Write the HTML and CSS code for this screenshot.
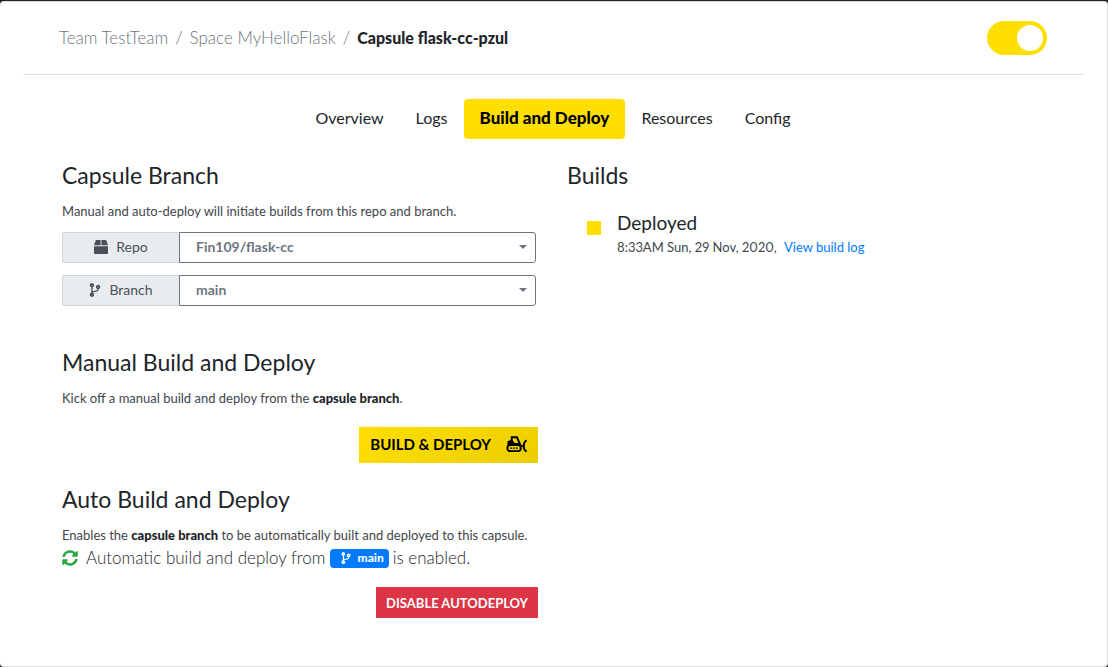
FILE: index.html
```html
<!DOCTYPE html>
<html lang="en">
<head>
<meta charset="utf-8">
<title>Capsule flask-cc-pzul</title>
<link rel="stylesheet" href="styles.css">
</head>
<body>
<svg class="sprite" aria-hidden="true">
  <symbol id="branch" viewBox="0 0 384 512"><path fill="currentColor" d="M384 144c0-44.200-35.800-80-80-80s-80 35.800-80 80c0 36.400 24.300 67.100 57.500 76.800-.6 16.100-4.200 28.500-11 36.900-15.400 19.200-49.300 22.400-85.200 25.700-28.200 2.600-57.400 5.400-81.300 16.900v-144c32.500-10.200 56-40.500 56-76.300 0-44.200-35.800-80-80-80S0 35.800 0 80c0 35.800 23.500 66.100 56 76.300v199.300C23.500 365.900 0 396.200 0 432c0 44.200 35.800 80 80 80s80-35.800 80-80c0-34-21.200-63.100-51.200-74.600 3.100-5.200 7.800-9.800 14.900-13.400 16.200-8.200 40.400-10.400 66.100-12.800 42.200-3.900 90-8.400 118.200-43.400 14-17.400 21.100-39.800 21.600-67.900 31.600-10.800 54.400-40.700 54.400-75.900zM80 64c8.800 0 16 7.200 16 16s-7.200 16-16 16-16-7.200-16-16 7.200-16 16-16zm0 384c-8.800 0-16-7.200-16-16s7.200-16 16-16 16 7.200 16 16-7.200 16-16 16zm224-320c8.800 0 16 7.200 16 16s-7.200 16-16 16-16-7.200-16-16 7.200-16 16-16z"/></symbol>
</svg>
<main class="card">
  <header class="card-header">
    <nav class="breadcrumb" aria-label="Breadcrumb">
      <a href="#">Team TestTeam</a><span>/</span><a href="#">Space MyHelloFlask</a><span>/</span><strong>Capsule flask-cc-pzul</strong>
    </nav>
    <input class="toggle" type="checkbox" role="switch" aria-label="Capsule enabled" checked>
  </header>
  <nav class="tabs" aria-label="Capsule sections">
    <a href="#">Overview</a>
    <a href="#">Logs</a>
    <a href="#" class="active" aria-current="page">Build and Deploy</a>
    <a href="#">Resources</a>
    <a href="#">Config</a>
  </nav>
  <div class="columns">
    <div class="column">
      <section class="section source">
        <h2>Capsule Branch</h2>
        <p class="note">Manual and auto-deploy will initiate builds from this repo and branch.</p>
        <div class="field">
          <label for="repo">
            <svg class="icon-box" viewBox="0 0 512 512" aria-hidden="true"><path fill="currentColor" d="M509.500 184.600 458.900 32.800C452.400 13.200 434.100 0 413.400 0H272v192h238.700c-.4-2.500-.4-5-1.200-7.400zM240 0H98.600c-20.700 0-39 13.200-45.500 32.800L2.500 184.600c-.8 2.400-.8 4.900-1.200 7.400H240V0zM0 224v240c0 26.500 21.500 48 48 48h416c26.500 0 48-21.500 48-48V224H0z"/></svg>
            Repo
          </label>
          <div class="select"><select id="repo"><option>Fin109/flask-cc</option></select></div>
        </div>
        <div class="field">
          <label for="branch-name"><svg class="icon-branch" aria-hidden="true"><use href="#branch"/></svg>Branch</label>
          <div class="select"><select id="branch-name"><option>main</option></select></div>
        </div>
      </section>
      <section class="section manual">
        <h2>Manual Build and Deploy</h2>
        <p class="note">Kick off a manual build and deploy from the <strong>capsule branch</strong>.</p>
        <button class="button build" type="button">BUILD &amp; DEPLOY
          <svg class="icon-dozer" viewBox="0 0 22 18" fill="none" stroke="currentColor" stroke-width="2" aria-hidden="true"><path d="M6 8V2h5.500l3 7"/><path fill="currentColor" stroke="none" d="M1.500 9V6.500L4 5h3l2 3h6.500v3h-14z"/><rect x="1.500" y="10" width="14" height="6.500" rx="3"/><path stroke-width="1.500" stroke-dasharray="2 1" d="M4.500 13.300h8.500"/><path d="M15 11h3.500M21.500 5Q18.500 7 18.500 11t3 6"/></svg>
        </button>
      </section>
      <section class="section auto">
        <h2>Auto Build and Deploy</h2>
        <p class="note">Enables the <strong>capsule branch</strong> to be automatically built and deployed to this capsule.</p>
        <p class="status">
          <svg class="icon-sync" viewBox="0 0 512 512" aria-hidden="true"><path fill="currentColor" d="M370.700 133.300C339.500 104 298.900 88 255.800 88c-77.500.1-144.300 53.200-162.800 126.900-1.300 5.400-6.100 9.100-11.700 9.100H24.100c-7.500 0-13.200-6.800-11.800-14.200C33.900 94.900 134.800 8 256 8c66.400 0 126.800 26.100 171.300 68.700L463 41c15.100-15.100 41-4.400 41 17v134c0 13.300-10.700 24-24 24H346c-21.400 0-32.100-25.900-17-41l41.700-41.700zM32 296h134c21.400 0 32.100 25.900 17 41l-41.800 41.800c31.300 29.300 71.800 45.300 114.900 45.300 77.400-.1 144.300-53.100 162.800-126.800 1.300-5.400 6.100-9.100 11.700-9.100h57.300c7.500 0 13.200 6.800 11.800 14.200C478.100 417.100 377.200 504 256 504c-66.400 0-126.800-26.100-171.300-68.700L49 471c-15.100 15.100-41 4.400-41-17V320c0-13.300 10.700-24 24-24z"/></svg>
          <span>Automatic build and deploy from</span>
          <span class="badge"><svg class="icon-branch" aria-hidden="true"><use href="#branch"/></svg>main</span>
          <span>is enabled.</span>
        </p>
        <button class="button disable" type="button">DISABLE AUTODEPLOY</button>
      </section>
    </div>
    <section class="builds">
      <h2>Builds</h2>
      <article class="build-item">
        <span class="marker"></span>
        <div>
          <h3>Deployed</h3>
          <p class="note">8:33AM Sun, 29 Nov, 2020, <a href="#">View build log</a></p>
        </div>
      </article>
    </section>
  </div>
</main>
</body>
</html>
```
FILE: styles.css
```css
* { box-sizing: border-box; }
body {
  margin: 0;
  padding-top: 1px;
  min-height: 100vh;
  display: flex;
  background: #212025;
  color: #212529;
  font: 400 16px/24px Lato, "Liberation Sans", sans-serif;
}
h2, h3, p { margin: 0; }
h2 { font-size: 23px; line-height: 30px; font-weight: 400; }
h3 { font-size: 19px; line-height: 24px; font-weight: 400; }
a { text-decoration: none; }
strong { color: #212529; font-weight: 900; }
svg { flex: none; }
.sprite { position: absolute; width: 0; height: 0; }
.card {
  flex: 1;
  background: #fff;
  border: solid #dcdcdc;
  border-width: 1px 1px 1px 0;
  border-radius: 4px;
  padding: 0 24px 0 23px;
}
.card-header {
  display: flex;
  align-items: center;
  justify-content: space-between;
  height: 73px;
  padding: 0 36px;
  border-bottom: 1px solid #dedede;
}
.breadcrumb { display: flex; gap: 7px; color: #6c757d; font-size: 17px; font-weight: 300; }
.breadcrumb a { color: #6c757d; }
.breadcrumb strong { font-size: 16px; }
.toggle {
  appearance: none;
  display: flex;
  justify-content: flex-end;
  align-items: center;
  width: 60px;
  height: 34px;
  margin: 0;
  padding: 4px;
  border-radius: 17px;
  background: #ffdf00;
}
.toggle::before { content: ""; width: 26px; height: 26px; border-radius: 50%; background: #fff; }
.toggle:not(:checked) { justify-content: flex-start; background: #ccc; }
.tabs { display: flex; justify-content: center; margin-top: 24px; }
.tabs a { padding: 7px 16px 9px; border-radius: 4px; color: #212529; }
.tabs .active { background: #ffdf00; color: #000; font-size: 17px; font-weight: 900; }
.columns {
  display: grid;
  grid-template-columns: 1fr 1fr;
  gap: 28px;
  padding: 21px 39px 46px;
}
.note { color: #41464b; font-size: 13px; line-height: 20px; margin-top: 11px; font-variant-numeric: proportional-nums; }
.note a { color: #007bff; margin-left: 4px; }
.section { display: flex; flex-direction: column; }
.column { padding-right: 1px; }
.source { padding-right: 2px; }
.manual { margin-top: 41px; }
.auto { margin-top: 21px; }
.field { display: flex; margin-top: 12px; }
.note + .field { margin-top: 11px; }
.field label {
  display: flex;
  align-items: center;
  justify-content: center;
  gap: 8px;
  width: 117px;
  height: 31px;
  padding-bottom: 2px;
  border: 1px solid #ced4da;
  border-right: 0;
  border-radius: 3px 0 0 3px;
  background: #e9ecef;
  color: #495057;
  font-size: 14px;
}
.icon-box { width: 14px; height: 14px; }
.icon-branch { width: 12px; height: 14px; }
.select { position: relative; flex: 1; }
.select select {
  appearance: none;
  width: 100%;
  height: 31px;
  padding: 0 16px 2px;
  border: 1px solid #6c757d;
  border-radius: 0 3px 3px 0;
  background: #fff;
  color: #6c757d;
  font: 700 14px/20px Lato, "Liberation Sans", sans-serif;
}
.select::after {
  content: "";
  position: absolute;
  top: 13px;
  right: 9px;
  border: 4px solid transparent;
  border-top-color: #6c757d;
  border-bottom: 0;
  pointer-events: none;
}
.button {
  display: flex;
  align-items: center;
  justify-content: center;
  align-self: flex-end;
  border: 0;
  font-family: Lato, "Liberation Sans", sans-serif;
}
.build {
  gap: 15px;
  height: 36px;
  margin-top: 19px;
  padding: 0 11px 3px;
  background: linear-gradient(135deg, #ffdf00, #ecce00);
  color: #000;
  font-size: 15px;
  font-weight: 700;
}
.icon-dozer { width: 21px; height: 18px; }
.disable {
  height: 31px;
  margin-top: 17px;
  padding: 0 10px;
  background: #dc3545;
  color: #fff;
  font-size: 13px;
  font-weight: 700;
}
.status { display: flex; align-items: center; gap: 4px; margin-top: 1px; font-size: 17px; font-weight: 300; }
.icon-sync { width: 16px; height: 16px; margin-right: 4px; color: #28a745; }
.badge {
  display: flex;
  align-items: center;
  gap: 6px;
  height: 19px;
  padding: 0 5px 0 10px;
  border-radius: 4px;
  background: #007bff;
  color: #fff;
  font-size: 12px;
  font-weight: 900;
}
.badge .icon-branch { height: 12px; }
.build-item { display: flex; gap: 16px; padding: 21px 0 0 20px; }
.marker { width: 14px; height: 14px; margin-top: 10px; border-radius: 1px; background: #ffdf00; }
.build-item .note { margin-top: 2px; }
```
